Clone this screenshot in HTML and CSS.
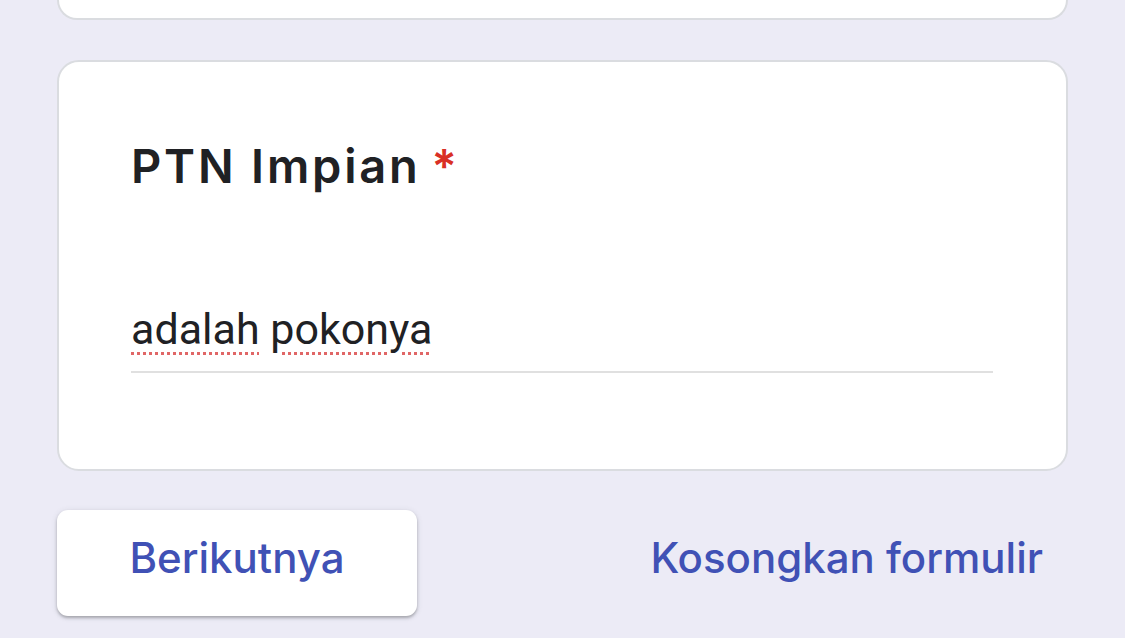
FILE: index.html
```html
<!DOCTYPE html>
<html>
<head>
<meta charset="utf-8">
<link rel="stylesheet" href="styles.css">
</head>
<body>
<div class="page">
  <div class="card card-prev"></div>
  <div class="card card-question">
    <div class="q-title">PTN Impian<span class="req">*</span></div>
    <div class="q-input"><span class="answer">adalah</span> <span class="answer">pokonya</span></div>
  </div>
  <div class="actions">
    <button class="btn-next">Berikutnya</button>
    <button class="btn-clear">Kosongkan formulir</button>
  </div>
</div>
</body>
</html>
```
FILE: styles.css
```css
html, body {
  margin: 0;
  padding: 0;
  background: #ecebf6;
  height: 100%;
  overflow: hidden;
}
.page {
  padding: 0 57px;
  display: flex;
  flex-direction: column;
}
.card {
  background: #fff;
  border: 2px solid #dadce0;
  border-radius: 22px;
  box-sizing: border-box;
}
.card-prev {
  height: 20px;
  border-top: none;
  border-top-left-radius: 0;
  border-top-right-radius: 0;
}
.card-question {
  margin-top: 40px;
  height: 411px;
  padding: 76px 73px 0 72px;
}
.q-title {
  font-family: "Inter", sans-serif;
  font-weight: 600;
  font-size: 47px;
  line-height: 56px;
  color: #202124;
  letter-spacing: 2.8px;
}
.req {
  color: #d93025;
  margin-left: 11px;
  letter-spacing: 0;
}
.q-input {
  margin-top: 111px;
  font-family: "Roboto", sans-serif;
  font-size: 43px;
  line-height: 48px;
  color: #202124;
  padding-bottom: 18px;
  border-bottom: 2px solid #e0e0e0;
}
.answer {
  text-decoration: underline dotted #e06666;
  text-decoration-thickness: 3px;
  text-underline-offset: 8px;
}
.actions {
  margin-top: 39px;
  display: flex;
  justify-content: space-between;
  align-items: center;
}
.btn-next {
  width: 360px;
  height: 106px;
  background: #fff;
  border: none;
  border-radius: 11px;
  box-shadow: 0 2px 3px rgba(60, 64, 67, 0.35), 0 1px 6px rgba(60, 64, 67, 0.12);
  font-family: "Inter", sans-serif;
  font-weight: 500;
  font-size: 42px;
  color: #4051b5;
  padding: 0 0 12px;
}
.btn-clear {
  background: none;
  border: none;
  font-family: "Inter", sans-serif;
  font-weight: 500;
  font-size: 42px;
  color: #4051b5;
  padding: 0 25px 12px 0;
}
```
